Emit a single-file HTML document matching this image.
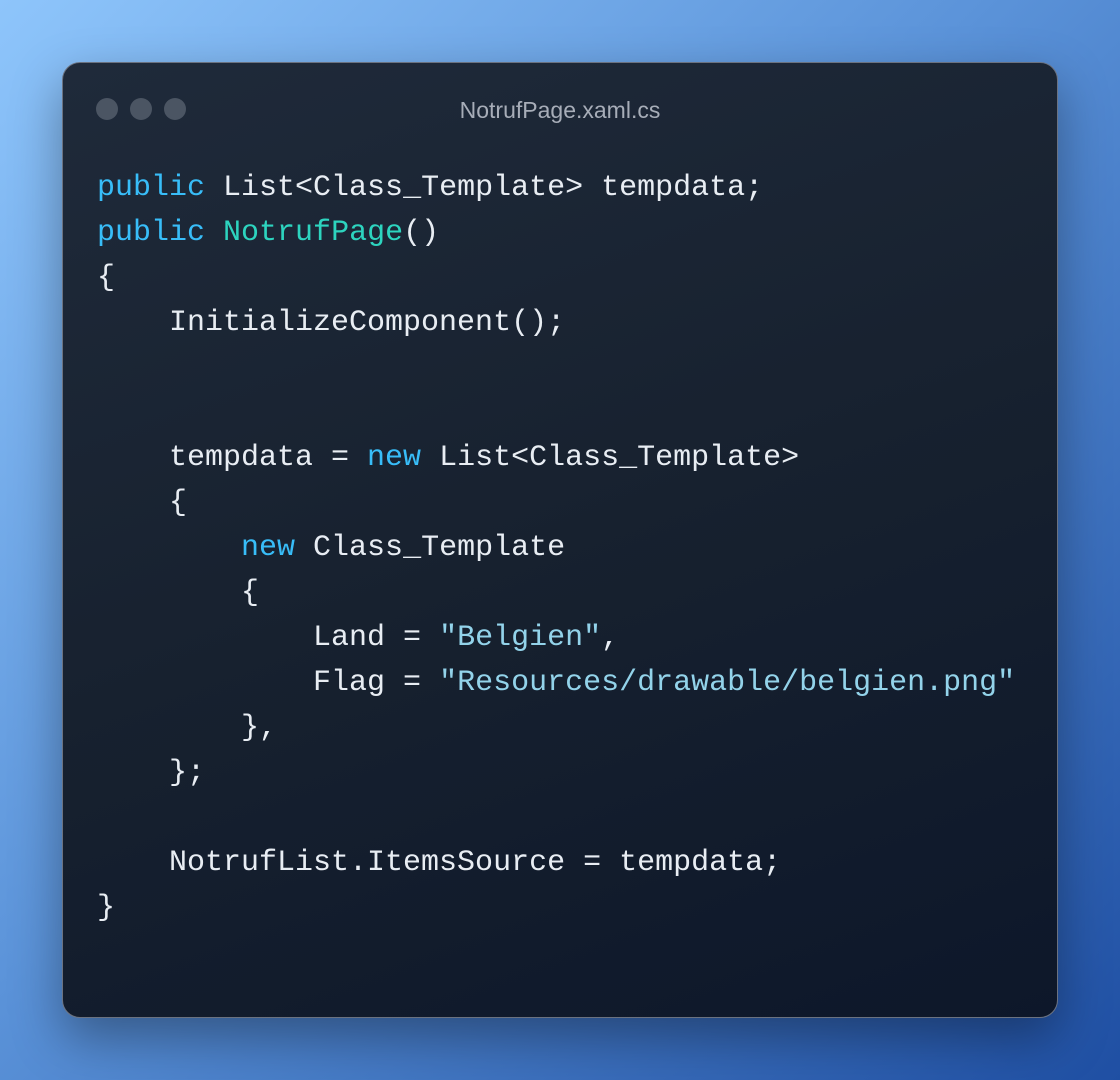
<!DOCTYPE html>
<html><head><meta charset="utf-8"><style>
html,body{margin:0;padding:0;}
body{width:1120px;height:1080px;overflow:hidden;background:linear-gradient(135deg,#8ec5fb 0%,#5b93d9 45%,#1f4fa3 100%);position:relative;font-family:"Liberation Sans",sans-serif;}
.win{position:absolute;left:62px;top:62px;width:996px;height:956px;border-radius:18px;border:1px solid #6b7280;background:linear-gradient(160deg,#1f2a3a 0%,#17212f 50%,#0d172a 100%);box-shadow:0 20px 50px rgba(0,0,0,0.35);box-sizing:border-box;}
.dot{position:absolute;top:35px;width:22px;height:22px;border-radius:50%;background:#4b5563;}
.title{position:absolute;top:33px;left:0;width:100%;text-align:center;color:#a7adb8;font-size:23px;line-height:28px;}
pre{position:absolute;left:34px;top:103px;margin:0;font-family:"Liberation Mono",monospace;font-size:30px;line-height:45px;color:#e8edf3;}
.k{color:#38bdf8}.f{color:#2dd4bf}.s{color:#93d3ea}
</style></head><body>
<div class="win">
<div class="dot" style="left:33px"></div><div class="dot" style="left:67px"></div><div class="dot" style="left:101px"></div>
<div class="title">NotrufPage.xaml.cs</div>
<pre><span class="k">public</span> List&lt;Class_Template&gt; tempdata;
<span class="k">public</span> <span class="f">NotrufPage</span>()
{
    InitializeComponent();


    tempdata = <span class="k">new</span> List&lt;Class_Template&gt;
    {
        <span class="k">new</span> Class_Template
        {
            Land = <span class="s">"Belgien"</span>,
            Flag = <span class="s">"Resources/drawable/belgien.png"</span>
        },
    };

    NotrufList.ItemsSource = tempdata;
}</pre>
</div>
</body></html>
